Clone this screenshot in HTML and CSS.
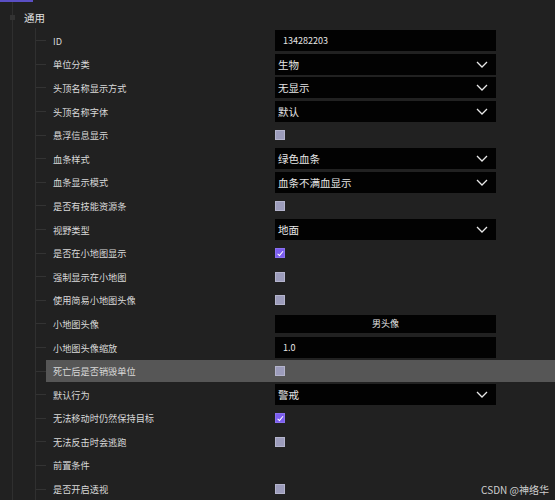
FILE: index.html
```html
<!DOCTYPE html>
<html lang="zh">
<head>
<meta charset="utf-8">
<link rel="stylesheet" href="styles.css">
</head>
<body>
<div class="topline"></div>
<div class="panel">
  <div class="group">
    <div class="group-head"><span class="marker"></span><span class="group-title">通用</span></div>
    <div class="children">
      <div class="row"><span class="conn"></span><div class="body"><span class="label">ID</span><div class="field input">134282203</div></div></div>
      <div class="row"><span class="conn"></span><div class="body"><span class="label">单位分类</span><div class="field select"><span>生物</span><svg class="chev" viewBox="0 0 12 7"><polyline points="1,1 6,6 11,1"/></svg></div></div></div>
      <div class="row"><span class="conn"></span><div class="body"><span class="label">头顶名称显示方式</span><div class="field select"><span>无显示</span><svg class="chev" viewBox="0 0 12 7"><polyline points="1,1 6,6 11,1"/></svg></div></div></div>
      <div class="row"><span class="conn"></span><div class="body"><span class="label">头顶名称字体</span><div class="field select"><span>默认</span><svg class="chev" viewBox="0 0 12 7"><polyline points="1,1 6,6 11,1"/></svg></div></div></div>
      <div class="row"><span class="conn"></span><div class="body"><span class="label">悬浮信息显示</span><span class="check"></span></div></div>
      <div class="row"><span class="conn"></span><div class="body"><span class="label">血条样式</span><div class="field select"><span>绿色血条</span><svg class="chev" viewBox="0 0 12 7"><polyline points="1,1 6,6 11,1"/></svg></div></div></div>
      <div class="row"><span class="conn"></span><div class="body"><span class="label">血条显示模式</span><div class="field select"><span>血条不满血显示</span><svg class="chev" viewBox="0 0 12 7"><polyline points="1,1 6,6 11,1"/></svg></div></div></div>
      <div class="row"><span class="conn"></span><div class="body"><span class="label">是否有技能资源条</span><span class="check"></span></div></div>
      <div class="row"><span class="conn"></span><div class="body"><span class="label">视野类型</span><div class="field select"><span>地面</span><svg class="chev" viewBox="0 0 12 7"><polyline points="1,1 6,6 11,1"/></svg></div></div></div>
      <div class="row"><span class="conn"></span><div class="body"><span class="label">是否在小地图显示</span><span class="check on"></span></div></div>
      <div class="row"><span class="conn"></span><div class="body"><span class="label">强制显示在小地图</span><span class="check"></span></div></div>
      <div class="row"><span class="conn"></span><div class="body"><span class="label">使用简易小地图头像</span><span class="check"></span></div></div>
      <div class="row"><span class="conn"></span><div class="body"><span class="label">小地图头像</span><div class="field button">男头像</div></div></div>
      <div class="row"><span class="conn"></span><div class="body"><span class="label">小地图头像缩放</span><div class="field input">1.0</div></div></div>
      <div class="row"><span class="conn"></span><div class="body hl"><span class="label">死亡后是否销毁单位</span><span class="check"></span></div></div>
      <div class="row"><span class="conn"></span><div class="body"><span class="label">默认行为</span><div class="field select"><span>警戒</span><svg class="chev" viewBox="0 0 12 7"><polyline points="1,1 6,6 11,1"/></svg></div></div></div>
      <div class="row"><span class="conn"></span><div class="body"><span class="label">无法移动时仍然保持目标</span><span class="check on"></span></div></div>
      <div class="row"><span class="conn"></span><div class="body"><span class="label">无法反击时会逃跑</span><span class="check"></span></div></div>
      <div class="row"><span class="conn"></span><div class="body"><span class="label">前置条件</span></div></div>
      <div class="row"><span class="conn"></span><div class="body"><span class="label">是否开启透视</span><span class="check"></span></div></div>
    </div>
  </div>
</div>
<div class="watermark">CSDN @神络华</div>
</body>
</html>
```
FILE: styles.css
```css
html, body {
  margin: 0;
  padding: 0;
  background: #212121;
  height: 100%;
  overflow: hidden;
}
body {
  font-family: "Noto Sans CJK SC", "Noto Sans", sans-serif;
  color: #d9d9d9;
  position: relative;
}
.topline {
  width: 33px;
  height: 2px;
  background: #5a4fc4;
}
.panel {
  margin-left: 12px;
  border-left: 1px solid #2f2f2f;
  height: 498px;
}
.group-head {
  height: 26px;
  display: flex;
  align-items: center;
  position: relative;
}
.marker {
  position: absolute;
  left: -3px;
  top: 13px;
  width: 5px;
  height: 5px;
  background: #333;
}
.group-title {
  margin-left: 11px;
  font-size: 10.5px;
  color: #e0e0e0;
  margin-top: 4px;
}
.children {
  margin-left: 22px;
  border-left: 1px solid #303030;
  padding-top: 1px;
}
.row {
  height: 23.6px;
  display: flex;
  align-items: center;
}
.conn {
  width: 10px;
  height: 1px;
  background: #333;
  flex: none;
}
.body {
  flex: 1;
  height: 22px;
  display: flex;
  align-items: center;
}
.body.hl {
  background: #565656;
}
.label {
  width: 222px;
  padding-left: 7px;
  font-size: 9.2px;
  flex: none;
  white-space: nowrap;
}
.field {
  width: 221px;
  height: 21px;
  background: #020202;
  box-sizing: border-box;
  display: flex;
  align-items: center;
  color: #e6e6e6;
}
.input {
  padding-left: 8px;
  font-size: 9px;
}
.select {
  padding-left: 3px;
  padding-right: 8px;
  justify-content: space-between;
  font-size: 10.5px;
}
.button {
  justify-content: center;
  font-size: 9px;
  height: 18px;
}
.chev {
  width: 12px;
  height: 7px;
  fill: none;
  stroke: #e8e8e8;
  stroke-width: 1.3;
}
.check {
  width: 8px;
  height: 8px;
  background: #9c9cbb;
  border: 1px solid #b4b4cc;
  position: relative;
}
.check.on {
  background: #7a5cee;
  border-color: #8a70f0;
}
.check.on::after {
  content: "";
  position: absolute;
  left: 2.5px;
  top: 0.5px;
  width: 2px;
  height: 4.5px;
  border-right: 1.3px solid #fff;
  border-bottom: 1.3px solid #fff;
  transform: rotate(40deg);
}
.watermark {
  position: absolute;
  right: 6px;
  bottom: 3px;
  font-size: 10px;
  color: #cfcfcf;
  font-family: "Noto Sans CJK SC", "Noto Sans", sans-serif;
}
```
